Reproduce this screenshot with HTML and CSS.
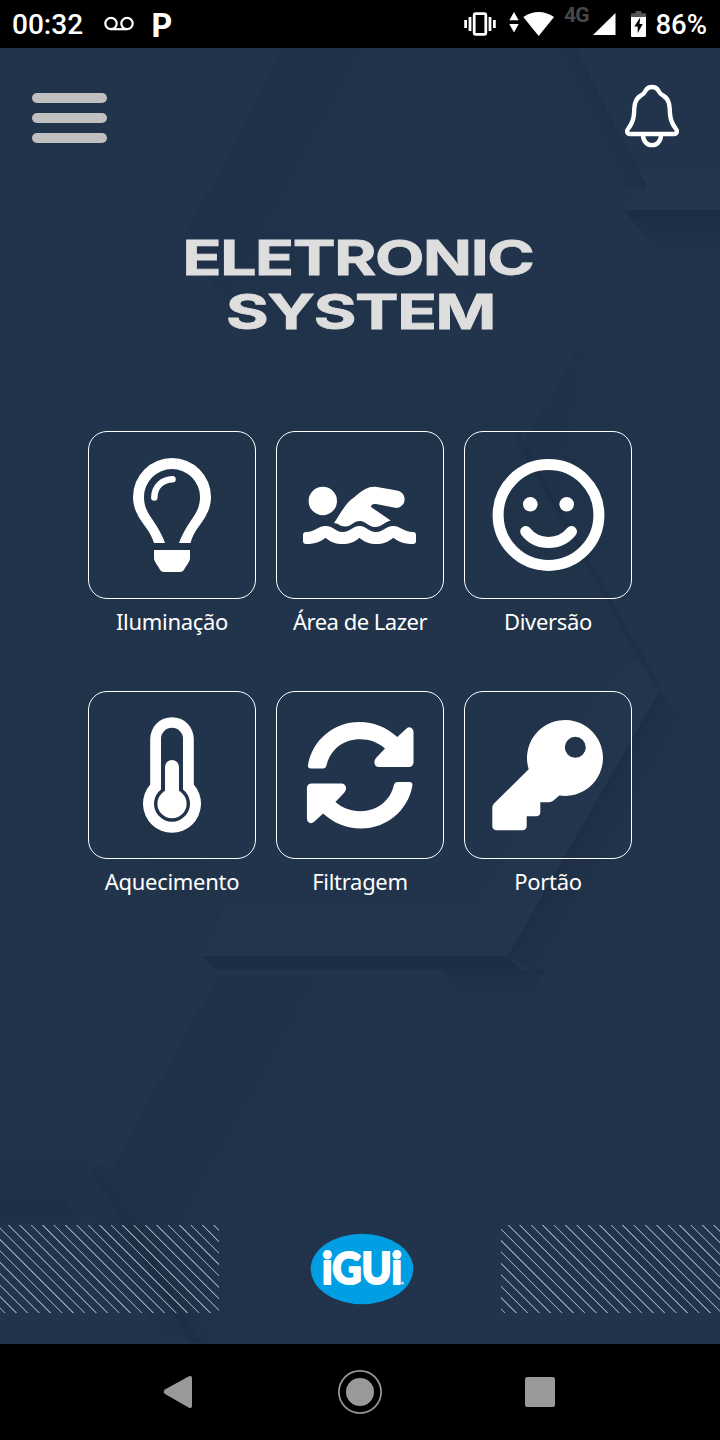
FILE: index.html
```html
<!DOCTYPE html>
<html lang="pt-BR">
<head>
    <meta charset="UTF-8">
    <meta name="viewport" content="width=device-width, initial-scale=1.0">
    <title>Eletronic System</title>
    <link rel="stylesheet" href="styles.css">
</head>
<body>

    <!-- Status Bar -->
    <div class="status-bar">
        <span class="time">00:32</span>
        <svg class="voicemail" width="30" height="16" viewBox="0 0 30 16" fill="none" stroke="#fff" stroke-width="2.2">
            <circle cx="7" cy="7.5" r="5.7"/>
            <circle cx="23" cy="7.5" r="5.7"/>
            <path d="M7 13.2h16"/>
        </svg>
        <span class="p-app">P</span>
        <div class="status-right">
            <svg class="vibrate" width="34" height="26" viewBox="0 0 34 26" fill="none" stroke="#fff" stroke-width="2.8">
                <rect x="11.2" y="2.7" width="11.6" height="20.6" rx="1.5"/>
                <path d="M7 6v14M27 6v14M2.6 9v8M31.4 9v8"/>
            </svg>
            <svg class="wifi" width="46" height="26" viewBox="0 0 46 26" fill="#fff">
                <path d="M0.3 9.3 5 1l4.7 8.3zM0.3 13 5 21.6 9.7 13z"/>
                <path d="M14.3 6Q29.7-4 45 6L29.7 25z"/>
            </svg>
            <span class="network">4G</span>
            <svg class="signal" width="23" height="22" viewBox="0 0 23 22" fill="#fff">
                <path d="M22.5 0v22H0z"/>
            </svg>
            <svg class="battery" width="15" height="26" viewBox="0 0 15 26">
                <path fill="#555" d="M4.5 0h6v2.2H14q1 0 1 1V6H0V3.2q0-1 1-1h3.5z"/>
                <path fill="#fff" d="M0 6h15v19q0 1-1 1H1q-1 0-1-1z"/>
                <path d="M9.2 6.5 3.3 15.5H6.7V22L11.7 13H8.5z"/>
            </svg>
            <span class="percent">86%</span>
        </div>
    </div>

    <div class="app">

        <!-- Hexagon Background -->
        <svg class="background" width="720" height="1296" viewBox="0 48 720 1296">
            <defs>
                <linearGradient id="fadeRight" x1="0" x2="1" y1="0.3" y2="0.7">
                    <stop offset="0" stop-color="#18263c" stop-opacity="0.22"/>
                    <stop offset="0.7" stop-color="#18263c" stop-opacity="0"/>
                </linearGradient>
                <linearGradient id="fadeDown" x1="0" x2="0" y1="0" y2="1">
                    <stop offset="0" stop-color="#17253a" stop-opacity="0.35"/>
                    <stop offset="1" stop-color="#17253a" stop-opacity="0"/>
                </linearGradient>
                <linearGradient id="edgeUp" gradientUnits="userSpaceOnUse" x1="612" y1="118" x2="590" y2="129">
                    <stop offset="0" stop-color="#17253a" stop-opacity="0.35"/>
                    <stop offset="1" stop-color="#17253a" stop-opacity="0"/>
                </linearGradient>
                <linearGradient id="edgeRing" gradientUnits="userSpaceOnUse" x1="584" y1="823" x2="626" y2="847">
                    <stop offset="0" stop-color="#17253a" stop-opacity="0.35"/>
                    <stop offset="1" stop-color="#17253a" stop-opacity="0"/>
                </linearGradient>
                <linearGradient id="edgeLow" gradientUnits="userSpaceOnUse" x1="141" y1="1256" x2="160" y2="1245">
                    <stop offset="0" stop-color="#17253a" stop-opacity="0.3"/>
                    <stop offset="1" stop-color="#17253a" stop-opacity="0"/>
                </linearGradient>
            </defs>
            <path fill="url(#fadeRight)" d="M283 48 183 240 270 370 480 370 620 210 530 48z"/>
            <path fill="url(#edgeUp)" d="M575 48 648 188 620 188 530 48z"/>
            <path fill="#24384f" fill-opacity="0.6" d="M648 188 640 174H720V210H625z"/>
            <path fill="#1d2d44" d="M625 210H720V222H633z"/>
            <path fill="url(#fadeDown)" d="M633 222H720V262L662 252z"/>
            <path fill="url(#fadeRight)" d="M635 245 520 450 660 690 720 690V245z"/>
            <path fill="#1e2e45" fill-opacity="0.25" fill-rule="evenodd" d="M205 425H515L660 690 508 956H203L48 690zM235 478H480L602 690 478 905H225L110 690z"/>
            <path fill="#253a52" fill-opacity="0.4" d="M602 690 640 655 660 690 508 956H203L225 905H478z"/>
            <path fill="none" stroke="#1a2940" stroke-opacity="0.3" stroke-width="5" d="M515 432 658 688"/>
            <path fill="url(#edgeRing)" d="M660 690 720 770 580 1000 508 956z"/>
            <path fill="#1d2d43" d="M201 956H508L520 970H216z"/>
            <path fill="url(#fadeDown)" d="M440 970H545L530 1000H465z"/>
            <path fill="url(#fadeRight)" d="M218 975 108 1175 190 1343H450L620 975z"/>
            <path fill="#1d2d44" fill-opacity="0.3" d="M0 1160H88L110 1180 200 1343H165L90 1222H0z"/>
            <path fill="url(#fadeDown)" d="M0 1201H66L84 1232H0z"/>
            <path fill="url(#edgeLow)" d="M92 1170 190 1343H240L130 1150z"/>
        </svg>

        <!-- Header -->
        <div class="header">
            <div class="menu">
                <span></span>
                <span></span>
                <span></span>
            </div>
            <svg class="bell" width="54" height="64" viewBox="0 0 54 64" fill="none" stroke="#fff" stroke-width="4.4" stroke-linejoin="round">
                <path d="M5 50C1.8 50 1.5 47 3 45C7 40 8.5 36 9 30C9.3 22 9.5 15 16 11.5C20 9.5 19.5 8 21 6C23.5 2 30.5 2 33 6C34.5 8 34 9.5 38 11.5C44.5 15 44.7 22 45 30C45.5 36 47 40 51 45C52.5 47 52.2 50 49 50z"/>
                <path d="M18 51C18 64.5 36 64.5 36 51"/>
            </svg>
        </div>

        <!-- Title -->
        <svg class="title" width="400" height="100" viewBox="160 234 400 100">
            <text x="182.5" y="274.5" textLength="351" lengthAdjust="spacingAndGlyphs">ELETRONIC</text>
            <text x="226" y="328.5" textLength="269" lengthAdjust="spacingAndGlyphs">SYSTEM</text>
        </svg>

        <!-- Options -->
        <div class="grid">
            <div class="item">
                <div class="tile">
                    <svg viewBox="1 1 166 166">
                        <path d="M66 112C62 100 57 96 52 88C47 80 45 73 45 66A39 39 0 0 1 123 66C123 73 121 80 116 88C111 96 106 100 102.5 112H91C95 101 100 94 106 85C110 79 112 73 112 66A28 28 0 0 0 56 66C56 73 58 79 62 85C68 94 73 101 77 112z"/>
                        <path d="M66 119H102V128C101 132 98 135 97 137C95.5 140 94 141 92 141H76C74 141 72.5 140 71 137C70 135 67 132 66 128z"/>
                        <path class="line" stroke-width="6.5" d="M66.3 66.5C66.3 56 74 48.5 84.5 48.3"/>
                    </svg>
                </div>
                <p>Iluminação</p>
            </div>
            <div class="item">
                <div class="tile">
                    <svg viewBox="1 1 166 166">
                        <circle cx="46.8" cy="70" r="14.2"/>
                        <path d="M58 92C65 82 70 71 78 66.5C88 58 93 55 101 56L121 59.5A8.8 8.8 0 0 1 120.5 77L100 73Q95 72.5 95 76L114.7 89.5C108 91 106 96 99 96C92 96 90 90 84 90C77 90 76 95.5 69 95.5C64 95.5 62 92 58 92z"/>
                        <path d="M30 101C40 101 41 95 49.7 95C58 95 59 101 66.5 101C75 101 76 95 83.5 95C91 95 92 101 100 101C108 101 109 95 117.3 95C125 95 127 101 137 101Q140 101 140 104V110Q140 113 137 113C127 113 122 110 117.3 106.7C112 111 107 113 100.5 113C94 113 88 111 83.5 106.7C79 111 73 113 66.5 113C60 113 54 111 49.7 106.7C45 110 40 113 30 113Q27 113 27 110V104Q27 101 30 101z"/>
                    </svg>
                </div>
                <p class="tight">Área de Lazer</p>
            </div>
            <div class="item">
                <div class="tile">
                    <svg viewBox="1 1 166 166">
                        <circle class="line" stroke-width="11" cx="84.5" cy="84" r="50.4"/>
                        <circle cx="66.3" cy="73.3" r="7.3"/>
                        <circle cx="102.7" cy="73.3" r="7.3"/>
                        <path class="line" stroke-width="11" d="M61.7 100.5C73 115 96 115 107.5 100.5"/>
                    </svg>
                </div>
                <p>Diversão</p>
            </div>
            <div class="item">
                <div class="tile">
                    <svg viewBox="1 1 166 166">
                        <path fill-rule="evenodd" d="M62.2 48A21.8 21.8 0 0 1 105.8 48V93.6A29 29 0 1 1 62.2 93.6zM73 47.7V98.4A18 18 0 1 0 95 98.4V47.7A11 11 0 0 0 73 47.7z"/>
                        <circle cx="84" cy="112.7" r="14.6"/>
                        <rect x="77" y="69" width="14" height="40" rx="7"/>
                    </svg>
                </div>
                <p>Aquecimento</p>
            </div>
            <div class="item">
                <div class="tile">
                    <svg viewBox="1 1 166 166">
                        <path id="arrow" d="M35 77.5Q31.5 77.5 32 74C36 50 57 31 83.5 31C98 31 111 36.5 121.3 46L130.5 37.5Q133 35.5 135.5 37Q137.5 38.5 137.5 41V71Q137.5 76 132.5 76H103Q99 76 98.3 71.5Q98.3 69 100 67L109 57.5C102 51.5 94 48.3 84 48.3C67 48.3 54 59 50.5 74.5Q49.5 77.5 47 77.5z"/>
                        <use href="#arrow" transform="rotate(180 84.2 84.3)"/>
                    </svg>
                </div>
                <p>Filtragem</p>
            </div>
            <div class="item">
                <div class="tile">
                    <svg viewBox="1 1 166 166">
                        <path fill-rule="evenodd" d="M64.7 78.3A38 38 0 1 1 95.3 104.6L89.5 109.5Q87.5 111.3 85 111.3H76.3V121Q76.3 125.3 72 125.3H62.7V134.5Q62.7 139.3 58 139.3H33Q28.3 139.3 28.3 134.5V117Q28.3 114.5 30 112.5zM100.8 56.3A10.5 10.5 0 1 0 121.8 56.3A10.5 10.5 0 1 0 100.8 56.3z"/>
                    </svg>
                </div>
                <p>Portão</p>
            </div>
        </div>

        <!-- Footer -->
        <div class="footer">
            <div class="stripes"></div>
            <svg class="logo" width="104" height="72" viewBox="0 0 104 72">
                <ellipse cx="52" cy="36" rx="51.3" ry="35.3" fill="#009fe3"/>
                <text x="12" y="50.5" textLength="80" lengthAdjust="spacingAndGlyphs">iGUi</text>
                <circle cx="92.5" cy="50" r="1.5" fill="#bfe6f8"/>
            </svg>
            <div class="stripes right"></div>
        </div>
    </div>

    <!-- Navigation Bar -->
    <div class="nav-bar">
        <svg width="44" height="44" viewBox="0 0 44 44">
            <path d="M5 20.5 31 6.3Q34 5 34 8V36Q34 39 31 37.7L7 24Q4.5 22 7 20z"/>
        </svg>
        <svg width="44" height="44" viewBox="0 0 44 44">
            <circle cx="22" cy="22" r="14"/>
            <circle cx="22" cy="22" r="21.1" fill="none" stroke="#999" stroke-width="1.7"/>
        </svg>
        <svg width="44" height="44" viewBox="0 0 44 44">
            <rect x="7" y="7" width="30" height="30" rx="2.5"/>
        </svg>
    </div>

</body>
</html>
```
FILE: styles.css
```css
body {
    font-family: "Noto Sans", sans-serif;
    background-color: #000;
    color: white;
    margin: 0;
    padding: 0;
}
svg {
    display: block;
}
.status-bar {
    display: flex;
    align-items: center;
    box-sizing: border-box;
    height: 48px;
    padding: 0 12px;
    font-family: Roboto, sans-serif;
    font-size: 28px;
    font-weight: 500;
    line-height: 48px;
}
.time, .percent {
    padding-top: 2px;
}
.voicemail {
    margin-left: 21px;
}
.p-app {
    font-family: Lato, sans-serif;
    font-weight: 900;
    font-size: 33px;
    margin-left: 17px;
}
.status-right {
    display: flex;
    align-items: center;
    margin-left: auto;
}
.wifi {
    margin-left: 12px;
}
.network {
    font-size: 21px;
    font-weight: 700;
    line-height: 24px;
    letter-spacing: -1px;
    color: #484848;
    margin: 0 5px 18px 9px;
}
.battery {
    margin: 0 9px 0 15px;
}
.percent {
    font-size: 27.5px;
    margin-right: 1px;
}
.app {
    position: relative;
    height: 1296px;
    background-color: #21344b;
    overflow: hidden;
}
.background {
    position: absolute;
    top: 0;
    left: 0;
}
.header, .title, .grid, .footer {
    position: relative;
}
.header {
    display: flex;
    justify-content: space-between;
    align-items: flex-start;
    padding: 36px 41px 0 32.4px;
}
.menu {
    display: flex;
    flex-direction: column;
    gap: 10px;
    padding-top: 9px;
}
.menu span {
    width: 75px;
    height: 10px;
    border-radius: 5px;
    background-color: #c0c0c0;
}
.title {
    margin: 86px auto 0;
    overflow: visible;
}
.title text {
    font-family: Inter, sans-serif;
    font-size: 47.5px;
    font-weight: 700;
    letter-spacing: -1px;
    fill: #dedede;
    stroke: #dedede;
    stroke-width: 0.8px;
}
.grid {
    display: grid;
    grid-template-columns: repeat(3, 168px);
    grid-auto-rows: 260px;
    column-gap: 20px;
    justify-content: center;
    margin-top: 97px;
}
.tile {
    box-sizing: border-box;
    height: 168px;
    border: 1px solid white;
    border-radius: 19px;
}
.tile svg {
    fill: white;
}
.line {
    fill: none;
    stroke: white;
    stroke-linecap: round;
}
.item p {
    margin: 7px -10px 0;
    font-size: 22px;
    line-height: 30px;
    letter-spacing: -0.3px;
    text-align: center;
}
.item p.tight {
    letter-spacing: -0.5px;
}
.footer {
    display: flex;
    justify-content: space-between;
    align-items: center;
    height: 88px;
    margin-top: 274px;
}
.logo {
    margin-left: 3px;
}
.stripes {
    width: 219px;
    height: 88px;
    background-image: repeating-linear-gradient(45deg, transparent 0, transparent 2.8px, #93a0ae 3.2px, #93a0ae 3.8px, transparent 4.3px, transparent 8.07px);
}
.stripes.right {
    background-image: repeating-linear-gradient(45deg, transparent 0, transparent 2.1px, #93a0ae 2.5px, #93a0ae 3.1px, transparent 3.6px, transparent 8.07px);
}
.logo text {
    font-family: Lato, sans-serif;
    font-size: 43px;
    font-weight: 900;
    fill: white;
    stroke: white;
    stroke-width: 2px;
    stroke-linejoin: round;
}
.nav-bar {
    display: flex;
    justify-content: center;
    align-items: center;
    gap: 136px;
    height: 96px;
}
.nav-bar svg {
    fill: #999;
}
```
